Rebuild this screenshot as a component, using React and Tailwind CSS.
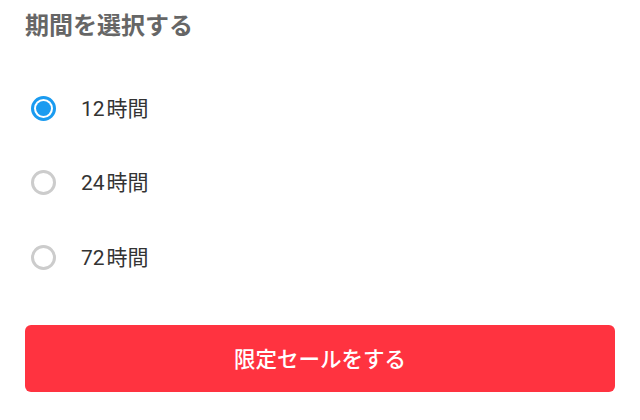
import React, { useState } from "react";

const options = ["12", "24", "72"];

export default function App() {
  const [sel, setSel] = useState("12");
  return (
    <div className="w-[640px] h-[420px] bg-white px-[25px] font-['Noto_Sans_CJK_JP',sans-serif] overflow-hidden">
      <div className="h-[48px] flex items-center text-[24px] font-bold text-[#666666] leading-none">
        期間を選択する
      </div>
      <div className="mt-[23px] flex flex-col">
        {options.map((o) => {
          const active = sel === o;
          return (
            <label
              key={o}
              className="h-[74.5px] flex items-center cursor-pointer"
              onClick={() => setSel(o)}
            >
              <span className="w-[38px] flex items-center">
                {active ? (
                  <span className="ml-[6px] w-[25px] h-[25px] rounded-full border-[3px] border-[#1a9bf0] flex items-center justify-center">
                    <span className="w-[15px] h-[15px] rounded-full bg-[#1a9bf0]" />
                  </span>
                ) : (
                  <span className="ml-[6px] w-[25px] h-[25px] rounded-full border-[3px] border-[#cccccc]" />
                )}
              </span>
              <span className="ml-[18px] text-[21px] text-[#333333] leading-none">
                <span className="font-['Roboto',sans-serif]">{o}</span>
                <span className="ml-[2px]">時間</span>
              </span>
            </label>
          );
        })}
      </div>
      <button className="mt-[30px] w-[590px] h-[67px] rounded-[6px] bg-[#ff3340] text-white text-[21.5px] font-medium flex items-center justify-center">
        限定セールをする
      </button>
    </div>
  );
}
